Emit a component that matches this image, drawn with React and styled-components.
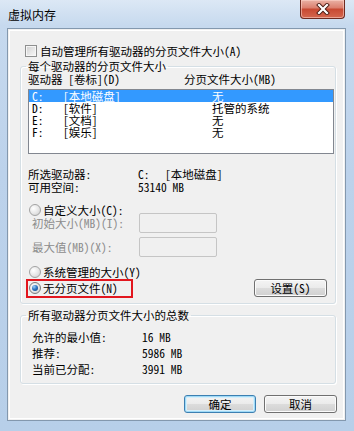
import React from "react";
import styled, { createGlobalStyle } from "styled-components";

const FONT = `"Noto Sans Mono CJK SC", "Noto Sans CJK SC", sans-serif`;

const Global = createGlobalStyle`
  html, body { margin: 0; padding: 0; background: #ffffff; }
  body { font-family: ${FONT}; }
  * { box-sizing: border-box; }
`;

const Window = styled.div`
  width: 354px;
  height: 431px;
  display: flex;
  flex-direction: column;
  padding: 0 8px 10px 7px;
  background: linear-gradient(180deg, #dce8f5 0%, #c6d9ee 6%, #bcd2eb 40%, #b7cfe9 100%);
  font-family: ${FONT};
  font-size: 11.5px;
  line-height: 12px;
  color: #000;
  overflow: hidden;
`;

const TitleBar = styled.div`
  height: 28px;
  flex: none;
  display: flex;
  align-items: flex-start;
  justify-content: space-between;
`;

const Title = styled.div`
  margin: 9px 0 0 1px;
  font-size: 12px;
  line-height: 12px;
  color: #000;
`;

const CloseButton = styled.div`
  width: 45px;
  height: 19px;
  margin-right: 1px;
  border: 1px solid #6e2a20;
  border-top: none;
  border-radius: 0 0 4px 4px;
  background: linear-gradient(180deg, #eab2a5 0%, #dc8170 42%, #c84a33 52%, #d4674f 100%);
  box-shadow: inset 0 0 0 1px rgba(255, 215, 205, 0.55);
  display: flex;
  align-items: center;
  justify-content: center;
`;

const Client = styled.div`
  flex: 1;
  display: flex;
  flex-direction: column;
  background: #f0f0f0;
  border: 1px solid #8398ae;
  box-shadow: inset 0 0 0 1px #f0f0f0, inset 0 0 0 2px #ffffff;
  padding: 0 9px 0 12px;
`;

const CheckRow = styled.div`
  display: flex;
  align-items: center;
  height: 13px;
  margin-top: 15px;
  padding-left: 5px;
  gap: 3px;
`;

const CheckBox = styled.span`
  width: 12px;
  height: 12px;
  flex: none;
  border: 1px solid #8e8f8f;
  background: linear-gradient(135deg, #cfcfcf 0%, #e9e9e9 60%, #f8f8f8 100%);
  box-shadow: inset 0 0 0 1px #f6f6f6;
`;

const Group = styled.fieldset`
  margin: ${(p) => p.$top}px 0 0 0;
  padding: ${(p) => p.$padTop}px 1px ${(p) => p.$padBottom}px 7px;
  border: 1px solid #d5dfe5;
  border-radius: 3px;
  box-shadow: inset 1px 1px 0 #ffffff, 1px 1px 0 #ffffff;
  min-width: 0;
  display: flex;
  flex-direction: column;
`;

const Legend = styled.legend`
  padding: 0 2px;
  margin-left: -2px;
  line-height: 12px;
  font-size: 11.5px;
`;

const HeaderRow = styled.div`
  display: grid;
  grid-template-columns: 156px 1fr;
  height: 12px;
`;

const ListBox = styled.div`
  margin-top: 4px;
  height: 65px;
  width: 306px;
  background: #ffffff;
  border: 1px solid #828790;
  display: flex;
  flex-direction: column;
`;

const ListRow = styled.div`
  display: grid;
  grid-template-columns: 31px 149px 1fr;
  height: 12px;
  padding-left: 3px;
  background: ${(p) => (p.$selected ? "#3399ff" : "transparent")};
  color: ${(p) => (p.$selected ? "#ffffff" : "#000000")};
`;

const InfoGrid = styled.div`
  display: grid;
  grid-template-columns: 110px 1fr;
  row-gap: ${(p) => p.$gap}px;
  margin-top: ${(p) => p.$top}px;
  padding-left: ${(p) => p.$indent}px;
  & > span { height: 12px; white-space: nowrap; }
`;

const Code = styled.span`
  display: inline-block;
  width: 27px;
`;

const RadioRow = styled.label`
  display: flex;
  align-items: center;
  gap: 2px;
  height: 12px;
  margin-top: ${(p) => p.$top}px;
  padding-left: 1px;
  color: #000;
  white-space: nowrap;
`;

const Radio = styled.span`
  position: relative;
  width: 12px;
  height: 12px;
  flex: none;
  border-radius: 50%;
  border: 1px solid ${(p) => (p.$checked ? "#7a7a7a" : "#a3a3a3")};
  background: radial-gradient(circle at 35% 35%, #ffffff 0%, #e6e6e6 55%, #c8c8c8 100%);
  &::after {
    content: "";
    display: ${(p) => (p.$checked ? "block" : "none")};
    position: absolute;
    left: 2px;
    top: 2px;
    width: 6px;
    height: 6px;
    border-radius: 50%;
    background: radial-gradient(circle at 35% 30%, #9fd0f7 0%, #2f78c4 45%, #0c3c78 100%);
  }
`;

const EditRow = styled.div`
  display: grid;
  grid-template-columns: 111px 74px;
  align-items: center;
  height: 20px;
  margin-top: ${(p) => p.$top}px;
  padding-left: 4px;
  color: #8c8c8c;
  white-space: nowrap;
`;

const EditBox = styled.span`
  display: block;
  height: 20px;
  margin-left: -4px;
  border: 1px solid #c5c5c5;
  border-radius: 2px;
  background: #f0f0f0;
`;

const LastRow = styled.div`
  display: flex;
  align-items: center;
  justify-content: space-between;
  height: 18px;
  margin-top: 1px;
  padding-right: 7px;
`;

const Highlight = styled.div`
  width: 103px;
  height: 15px;
  display: flex;
  align-items: center;
  outline: 2px solid #e2161e;
`;

const Button = styled.button`
  width: ${(p) => p.$w}px;
  height: 18px;
  padding: 0;
  font-family: ${FONT};
  font-size: 11.5px;
  line-height: 12px;
  color: #000;
  border-radius: 3px;
  border: 1px solid ${(p) => (p.$default ? "#3c7fb1" : "#707070")};
  background: linear-gradient(180deg, #f4f4f4 0%, #ebebeb 48%, #dcdcdc 52%, #d0d0d0 100%);
  box-shadow: ${(p) =>
    p.$default ? "inset 0 0 0 1px #9fdaf7, inset 0 0 0 2px #d6eefa" : "inset 0 0 0 1px #fbfbfb"};
`;

const ButtonBar = styled.div`
  display: flex;
  justify-content: flex-end;
  gap: 8px;
  margin-top: 11px;
  margin-right: -1px;
`;

const drives = [
  { d: "C:", v: "[本地磁盘]", s: "无", sel: true },
  { d: "D:", v: "[软件]", s: "托管的系统" },
  { d: "E:", v: "[文档]", s: "无" },
  { d: "F:", v: "[娱乐]", s: "无" },
];

export default function App() {
  return (
    <>
      <Global />
      <Window>
        <TitleBar>
          <Title>虚拟内存</Title>
          <CloseButton>
            <svg width="14" height="12" viewBox="0 0 14 12">
              <path d="M3 2 L11 10 M11 2 L3 10" stroke="#4a1a12" strokeWidth="4" strokeLinecap="square" />
              <path d="M3 2 L11 10 M11 2 L3 10" stroke="#ffffff" strokeWidth="2.2" strokeLinecap="square" />
            </svg>
          </CloseButton>
        </TitleBar>
        <Client>
          <CheckRow>
            <CheckBox />
            <span>自动管理所有驱动器的分页文件大小(A)</span>
          </CheckRow>

          <Group $top={3} $padTop={1} $padBottom={6}>
            <Legend>每个驱动器的分页文件大小</Legend>
            <HeaderRow>
              <span>驱动器 [卷标](D)</span>
              <span>分页文件大小(MB)</span>
            </HeaderRow>
            <ListBox>
              {drives.map((r) => (
                <ListRow key={r.d} $selected={r.sel}>
                  <span>{r.d}</span>
                  <span>{r.v}</span>
                  <span>{r.s}</span>
                </ListRow>
              ))}
            </ListBox>
            <InfoGrid $top={14} $gap={1} $indent={0}>
              <span>所选驱动器:</span>
              <span>
                <Code>C:</Code>[本地磁盘]
              </span>
              <span>可用空间:</span>
              <span>53140 MB</span>
            </InfoGrid>
            <RadioRow $top={11}>
              <Radio />
              <span>自定义大小(C):</span>
            </RadioRow>
            <EditRow $top={-3}>
              <span>初始大小(MB)(I):</span>
              <EditBox />
            </EditRow>
            <EditRow $top={4}>
              <span>最大值(MB)(X):</span>
              <EditBox />
            </EditRow>
            <RadioRow $top={9}>
              <Radio />
              <span>系统管理的大小(Y)</span>
            </RadioRow>
            <LastRow>
              <Highlight>
                <RadioRow $top={0}>
                  <Radio $checked />
                  <span>无分页文件(N)</span>
                </RadioRow>
              </Highlight>
              <Button $w={73}>设置(S)</Button>
            </LastRow>
          </Group>

          <Group $top={5} $padTop={10} $padBottom={8}>
            <Legend>所有驱动器分页文件大小的总数</Legend>
            <InfoGrid $top={0} $gap={4} $indent={4}>
              <span>允许的最小值:</span>
              <span>16 MB</span>
              <span>推荐:</span>
              <span>5986 MB</span>
              <span>当前已分配:</span>
              <span>3991 MB</span>
            </InfoGrid>
          </Group>

          <ButtonBar>
            <Button $w={72} $default>确定</Button>
            <Button $w={73}>取消</Button>
          </ButtonBar>
        </Client>
      </Window>
    </>
  );
}
